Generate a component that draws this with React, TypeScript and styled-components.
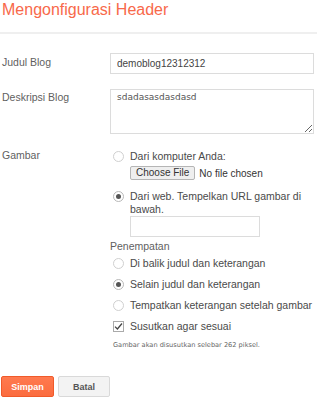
import styled, { createGlobalStyle } from "styled-components";

const GlobalStyle = createGlobalStyle`
  html, body {
    margin: 0;
    padding: 0;
    background: #fff;
    font-family: "Liberation Sans", Arial, sans-serif;
  }
`;

const Page = styled.div`
  width: 317px;
  padding: 0 3px 0 2px;
  box-sizing: border-box;
`;

const Title = styled.h1`
  margin: 0;
  padding-top: 1px;
  font-size: 16px;
  line-height: 18px;
  font-weight: normal;
  color: #f8694a;
`;

const Divider = styled.div`
  height: 2px;
  margin-top: 13px;
  background: #efefef;
  margin-left: -2px;
  margin-right: -3px;
`;

const Form = styled.div`
  display: grid;
  grid-template-columns: 108px 1fr;
  row-gap: 15px;
  margin-top: 19px;
`;

const Label = styled.div<{ $top?: number }>`
  font-size: 10.5px;
  line-height: 13px;
  color: #5f5f5f;
  padding-top: ${(p) => p.$top ?? 3}px;
`;

const TextInput = styled.input<{ $width?: number }>`
  box-sizing: border-box;
  width: ${(p) => (p.$width ? `${p.$width}px` : "100%")};
  height: 21px;
  margin: 0;
  padding: 0 6px;
  border: 1px solid #dcdcdc;
  border-radius: 0;
  font-family: "Liberation Sans", Arial, sans-serif;
  font-size: 10px;
  color: #444;
  outline: none;
`;

const TextArea = styled.textarea`
  box-sizing: border-box;
  width: 100%;
  height: 45px;
  margin: 0;
  padding: 2px 6px;
  border: 1px solid #dcdcdc;
  border-radius: 0;
  font-family: "DejaVu Sans", Verdana, sans-serif;
  font-size: 9px;
  line-height: 11px;
  color: #555;
  outline: none;
  display: block;
`;

const Options = styled.div`
  padding-top: 1px;
  display: flex;
  flex-direction: column;
`;

const Option = styled.div<{ $height?: number; $gapTop?: number }>`
  display: flex;
  align-items: ${(p) => (p.$height ? "center" : "flex-start")};
  height: ${(p) => (p.$height ? `${p.$height}px` : "auto")};
  margin-top: ${(p) => p.$gapTop ?? 0}px;
  padding-left: 3px;
  gap: 6px;
`;

const OptionText = styled.div`
  font-size: 10.5px;
  line-height: 13px;
  color: #4a4a4a;
  flex: 1;
`;

const Radio = styled.span<{ $checked?: boolean; $offset?: number }>`
  flex: none;
  box-sizing: border-box;
  width: 11px;
  height: 11px;
  margin-top: ${(p) => p.$offset ?? 0}px;
  border-radius: 50%;
  border: 1px solid ${(p) => (p.$checked ? "#b8b8b8" : "#d0d0d0")};
  background: #fff;
  display: flex;
  align-items: center;
  justify-content: center;
  &::after {
    content: "";
    display: ${(p) => (p.$checked ? "block" : "none")};
    width: 5px;
    height: 5px;
    border-radius: 50%;
    background: #555;
  }
`;

const CheckBox = styled.span`
  flex: none;
  box-sizing: border-box;
  width: 11px;
  height: 11px;
  border: 1px solid #aaa;
  background: #fff;
  display: flex;
  align-items: center;
  justify-content: center;
`;

const FileRow = styled.div`
  display: flex;
  align-items: center;
  gap: 4px;
  margin: 3px 0 0 20px;
`;

const FileButton = styled.button`
  height: 14px;
  padding: 0 5px;
  margin: 0;
  border: 1px solid #b5b5b5;
  border-radius: 2px;
  background: #efefef;
  font-family: "Liberation Sans", Arial, sans-serif;
  font-size: 10px;
  line-height: 12px;
  color: #333;
`;

const FileNote = styled.span`
  font-size: 10px;
  color: #333;
`;

const Indented = styled.div`
  margin-left: 20px;
`;

const SubHeading = styled.div`
  font-size: 10.5px;
  line-height: 13px;
  color: #5f5f5f;
  margin-top: 3px;
`;

const Hint = styled.div`
  margin: 3px 0 0 3px;
  font-family: "DejaVu Sans", Verdana, sans-serif;
  font-size: 6.6px;
  line-height: 10px;
  color: #666;
`;

const Actions = styled.div`
  display: flex;
  gap: 4px;
  margin-top: 26px;
  margin-left: -1px;
`;

const Button = styled.button<{ $primary?: boolean }>`
  box-sizing: border-box;
  width: ${(p) => (p.$primary ? 53 : 52)}px;
  height: 21px;
  margin: 0;
  padding: 0;
  border: 1px solid ${(p) => (p.$primary ? "#f05a2a" : "#d9d9d9")};
  border-radius: 2px;
  background: ${(p) =>
    p.$primary ? "linear-gradient(#ff7a4f, #fb6c3f)" : "#f3f3f3"};
  color: ${(p) => (p.$primary ? "#fff" : "#555")};
  font-family: "Liberation Sans", Arial, sans-serif;
  font-size: 9px;
  font-weight: bold;
`;

export default function App() {
  return (
    <Page>
      <GlobalStyle />
      <Title>Mengonfigurasi Header</Title>
      <Divider />
      <Form>
        <Label $top={3}>Judul Blog</Label>
        <TextInput readOnly value="demoblog12312312" />

        <Label $top={2}>Deskripsi Blog</Label>
        <TextArea readOnly value="sdadasasdasdasd" />

        <Label $top={0}>Gambar</Label>
        <Options>
          <Option>
            <Radio $offset={1} />
            <OptionText>Dari komputer Anda:</OptionText>
          </Option>
          <FileRow>
            <FileButton>Choose File</FileButton>
            <FileNote>No file chosen</FileNote>
          </FileRow>
          <Option $gapTop={10}>
            <Radio $checked $offset={1} />
            <OptionText>Dari web. Tempelkan URL gambar di bawah.</OptionText>
          </Option>
          <Indented>
            <TextInput $width={130} readOnly value="" />
          </Indented>
          <SubHeading>Penempatan</SubHeading>
          <Option $height={21}>
            <Radio />
            <OptionText>Di balik judul dan keterangan</OptionText>
          </Option>
          <Option $height={21}>
            <Radio $checked />
            <OptionText>Selain judul dan keterangan</OptionText>
          </Option>
          <Option $height={21}>
            <Radio />
            <OptionText>Tempatkan keterangan setelah gambar</OptionText>
          </Option>
          <Option $height={21}>
            <CheckBox>
              <svg width="9" height="9" viewBox="0 0 9 9">
                <path d="M1 4.6 L3.4 7 L8 1.5" fill="none" stroke="#444" strokeWidth="1.3" />
              </svg>
            </CheckBox>
            <OptionText>Susutkan agar sesuai</OptionText>
          </Option>
          <Hint>Gambar akan disusutkan selebar 262 piksel.</Hint>
        </Options>
      </Form>
      <Actions>
        <Button $primary>Simpan</Button>
        <Button>Batal</Button>
      </Actions>
    </Page>
  );
}
